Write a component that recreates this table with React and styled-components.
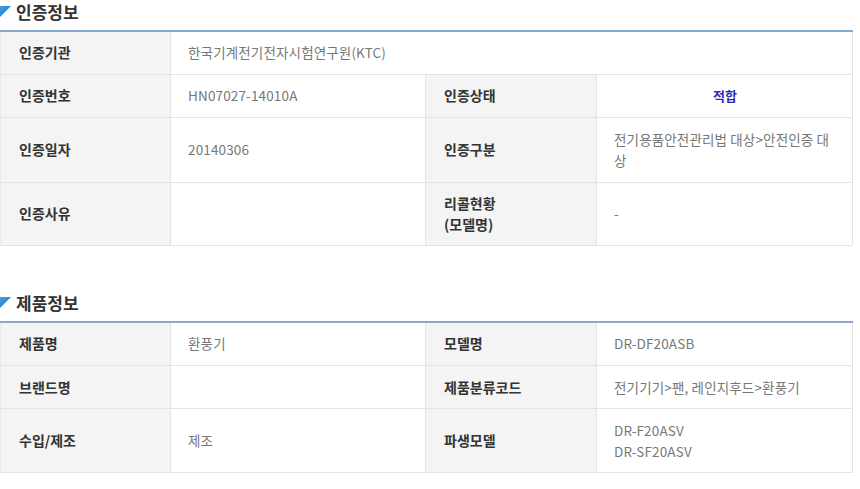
import React from "react";
import styled, { createGlobalStyle } from "styled-components";

const Global = createGlobalStyle`
  html, body { margin: 0; padding: 0; background: #fff; }
  body { font-family: "Noto Sans CJK KR", "Noto Sans", sans-serif; }
`;

const Page = styled.div`
  width: 852px;
  display: flex;
  flex-direction: column;
`;

const Section = styled.section`
  display: flex;
  flex-direction: column;
  margin-top: ${(p) => p.$top || 0}px;
`;

const TitleRow = styled.h2`
  margin: 0;
  height: 30px;
  display: flex;
  align-items: flex-start;
  gap: 5px;
  font-size: 17px;
  font-weight: 700;
  color: #333;
  line-height: 24px;
`;

const Tri = styled.svg`
  width: 11px;
  height: 11px;
  margin-top: 6px;
  flex: none;
`;

const Table = styled.table`
  width: 852px;
  border-collapse: collapse;
  table-layout: fixed;
  border-top: 2px solid #86abd0;
`;

const Row = styled.tr`
  height: ${(p) => p.$h}px;
`;

const Label = styled.th`
  background: #f4f4f4;
  border: 1px solid #e3e3e3;
  border-top: none;
  text-align: left;
  padding: 0 0 0 18px;
  font-size: 14px;
  font-weight: 700;
  color: #333;
  line-height: 21px;
  vertical-align: middle;
  &:first-child { border-left: 1px solid #e8e8e8; }
`;

const Value = styled.td`
  border: 1px solid #e3e3e3;
  border-top: none;
  padding: 0 16px 0 17px;
  font-size: 13.5px;
  letter-spacing: 0.15px;
  color: #777;
  line-height: 21px;
  vertical-align: middle;
  word-break: break-all;
  text-align: ${(p) => (p.$center ? "center" : "left")};
`;

const Status = styled.span`
  color: #2a2ab8;
  font-weight: 700;
  font-size: 13px;
`;

function Triangle() {
  return (
    <Tri viewBox="0 0 11 11">
      <defs>
        <linearGradient id="tg" x1="0" y1="0" x2="1" y2="1">
          <stop offset="0" stopColor="#3fa0e8" />
          <stop offset="1" stopColor="#1673c8" />
        </linearGradient>
      </defs>
      <polygon points="0,0 11,0 0,11" fill="url(#tg)" />
    </Tri>
  );
}

function Title({ children }) {
  return (
    <TitleRow>
      <Triangle />
      {children}
    </TitleRow>
  );
}

function Cols() {
  return (
    <colgroup>
      <col style={{ width: 170 }} />
      <col style={{ width: 255 }} />
      <col style={{ width: 171 }} />
      <col style={{ width: 256 }} />
    </colgroup>
  );
}

export default function App() {
  return (
    <>
      <Global />
      <Page>
        <Section>
          <Title>인증정보</Title>
          <Table>
            <Cols />
            <tbody>
              <Row $h={43}>
                <Label>인증기관</Label>
                <Value colSpan={3}>한국기계전기전자시험연구원(KTC)</Value>
              </Row>
              <Row $h={43}>
                <Label>인증번호</Label>
                <Value>HN07027-14010A</Value>
                <Label>인증상태</Label>
                <Value $center>
                  <Status>적합</Status>
                </Value>
              </Row>
              <Row $h={65}>
                <Label>인증일자</Label>
                <Value>20140306</Value>
                <Label>인증구분</Label>
                <Value>전기용품안전관리법 대상&gt;안전인증 대상</Value>
              </Row>
              <Row $h={63}>
                <Label>인증사유</Label>
                <Value></Value>
                <Label>
                  리콜현황
                  <br />
                  (모델명)
                </Label>
                <Value>-</Value>
              </Row>
            </tbody>
          </Table>
        </Section>
        <Section $top={45}>
          <Title>제품정보</Title>
          <Table>
            <Cols />
            <tbody>
              <Row $h={44}>
                <Label>제품명</Label>
                <Value>환풍기</Value>
                <Label>모델명</Label>
                <Value>DR-DF20ASB</Value>
              </Row>
              <Row $h={43}>
                <Label>브랜드명</Label>
                <Value></Value>
                <Label>제품분류코드</Label>
                <Value>전기기기&gt;팬, 레인지후드&gt;환풍기</Value>
              </Row>
              <Row $h={64}>
                <Label>수입/제조</Label>
                <Value>제조</Value>
                <Label>파생모델</Label>
                <Value>
                  DR-F20ASV
                  <br />
                  DR-SF20ASV
                </Value>
              </Row>
            </tbody>
          </Table>
        </Section>
      </Page>
    </>
  );
}
